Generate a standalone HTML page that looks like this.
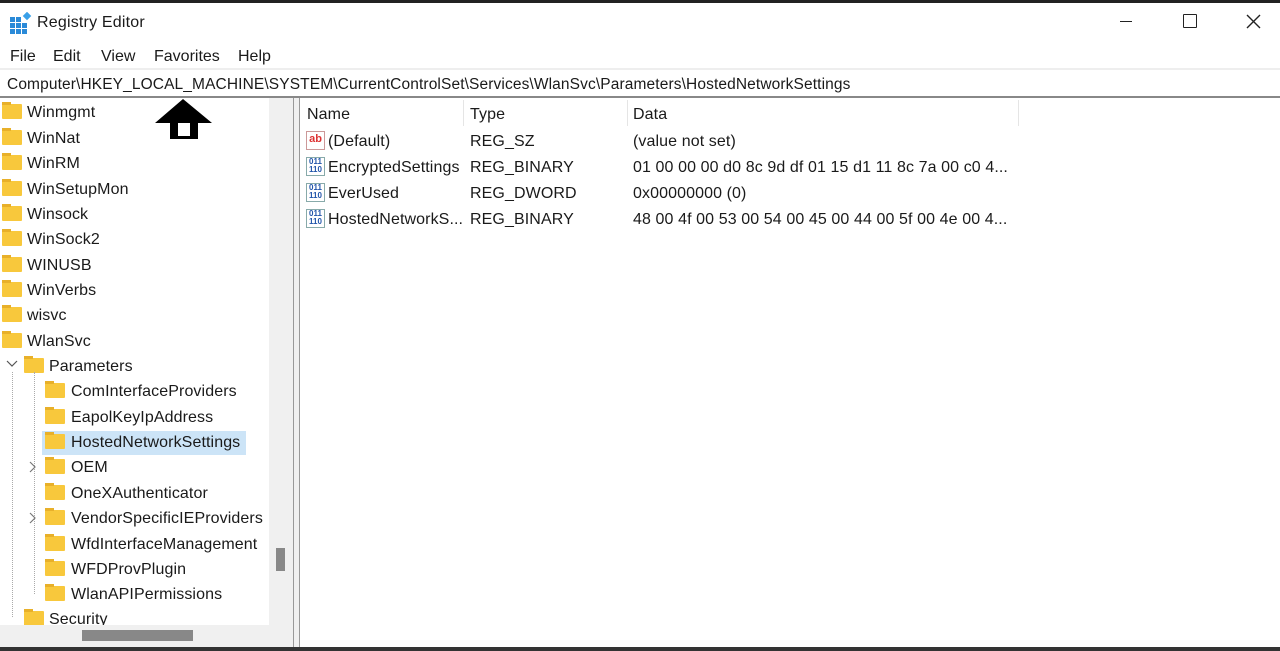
<!DOCTYPE html><html><head><style>
*{margin:0;padding:0;box-sizing:border-box}
body{width:1280px;height:651px;overflow:hidden;background:#fff;font-family:"Liberation Sans",sans-serif;font-size:16px;color:#1a1a1a;position:relative}
.a{position:absolute;white-space:nowrap}
.f{position:absolute;width:20px;height:15px;background:#f8c83c;border-radius:1px}
.f:before{content:"";position:absolute;left:0;top:-2px;width:9px;height:3px;background:#e8b02a}
.t{position:absolute;white-space:nowrap;letter-spacing:0.1px}
.ic{position:absolute;width:19px;height:19px;border:1px solid #8aa;background:#fff;font-size:8px;line-height:8px;color:#2255aa;font-weight:bold;text-align:center}
</style></head><body>
<div class="a" style="left:0;top:0;width:1280px;height:3px;background:#222"></div>
<div class="a" style="left:0;top:647px;width:1280px;height:4px;background:#333"></div>
<svg class="a" style="left:10px;top:12px" width="22" height="22"><rect x="0" y="5" width="5" height="5" fill="#2a8ad8"/><rect x="6" y="5" width="5" height="5" fill="#2a8ad8"/><rect x="0" y="11" width="5" height="5" fill="#2a8ad8"/><rect x="6" y="11" width="5" height="5" fill="#2a8ad8"/><rect x="12" y="11" width="5" height="5" fill="#2a8ad8"/><rect x="0" y="17" width="5" height="5" fill="#2a8ad8"/><rect x="6" y="17" width="5" height="5" fill="#2a8ad8"/><rect x="12" y="17" width="5" height="5" fill="#2a8ad8"/><rect x="14" y="1" width="6" height="6" fill="#3aa0e8" transform="rotate(45 17 4)"/></svg>
<div class="a" style="left:37px;top:14px;font-size:16px;letter-spacing:0.2px">Registry Editor</div>
<div class="a" style="left:1120px;top:21px;width:12px;height:1px;background:#222"></div>
<div class="a" style="left:1183px;top:14px;width:14px;height:14px;border:1.5px solid #222;border-radius:1px"></div>
<svg class="a" style="left:1246px;top:14px" width="15" height="15"><path d="M1 1L14 14M14 1L1 14" stroke="#222" stroke-width="1.4"/></svg>
<div class="a" style="left:10px;top:48px">File</div>
<div class="a" style="left:53px;top:48px">Edit</div>
<div class="a" style="left:101px;top:48px">View</div>
<div class="a" style="left:154px;top:48px">Favorites</div>
<div class="a" style="left:238px;top:48px">Help</div>
<div class="a" style="left:0;top:68px;width:1280px;height:30px;border-top:2px solid #eee;border-bottom:2px solid #888"></div>
<div class="a" style="left:7px;top:76px;font-size:15.5px;letter-spacing:0.12px">Computer\HKEY_LOCAL_MACHINE\SYSTEM\CurrentControlSet\Services\WlanSvc\Parameters\HostedNetworkSettings</div>
<div class="a" style="left:293px;top:98px;width:7px;height:549px;background:#f0f0f0;border-left:1px solid #999;border-right:1px solid #999"></div>
<div class="a" style="left:269px;top:98px;width:24px;height:528px;background:#f0f0f0"></div>
<div class="a" style="left:276px;top:548px;width:9px;height:23px;background:#888"></div>
<div class="a" style="left:0;top:625px;width:293px;height:22px;background:#f0f0f0"></div>
<div class="a" style="left:82px;top:630px;width:111px;height:11px;background:#888"></div>
<div class="f" style="left:2px;top:104px"></div><div class="t" style="left:27px;top:104px">Winmgmt</div>
<div class="f" style="left:2px;top:130px"></div><div class="t" style="left:27px;top:130px">WinNat</div>
<div class="f" style="left:2px;top:155px"></div><div class="t" style="left:27px;top:155px">WinRM</div>
<div class="f" style="left:2px;top:181px"></div><div class="t" style="left:27px;top:181px">WinSetupMon</div>
<div class="f" style="left:2px;top:206px"></div><div class="t" style="left:27px;top:206px">Winsock</div>
<div class="f" style="left:2px;top:231px"></div><div class="t" style="left:27px;top:231px">WinSock2</div>
<div class="f" style="left:2px;top:257px"></div><div class="t" style="left:27px;top:257px">WINUSB</div>
<div class="f" style="left:2px;top:282px"></div><div class="t" style="left:27px;top:282px">WinVerbs</div>
<div class="f" style="left:2px;top:307px"></div><div class="t" style="left:27px;top:307px">wisvc</div>
<div class="f" style="left:2px;top:333px"></div><div class="t" style="left:27px;top:333px">WlanSvc</div>
<svg class="a" style="left:6px;top:360px" width="12" height="8"><path d="M1 1L6 6L11 1" stroke="#555" fill="none" stroke-width="1.2"/></svg>
<div class="f" style="left:24px;top:358px"></div><div class="t" style="left:49px;top:358px">Parameters</div>
<div class="a" style="left:12px;top:372px;width:0;height:245px;border-left:1px dotted #aaa"></div>
<div class="a" style="left:34px;top:372px;width:0;height:222px;border-left:1px dotted #aaa"></div>
<div class="a" style="left:42px;top:431px;width:204px;height:24px;background:#cce4f7"></div>
<div class="f" style="left:45px;top:383px"></div><div class="t" style="left:71px;top:383px">ComInterfaceProviders</div>
<div class="f" style="left:45px;top:409px"></div><div class="t" style="left:71px;top:409px">EapolKeyIpAddress</div>
<div class="f" style="left:45px;top:434px"></div><div class="t" style="left:71px;top:434px">HostedNetworkSettings</div>
<svg class="a" style="left:29px;top:461px" width="8" height="12"><path d="M1 1L6 6L1 11" stroke="#777" fill="none" stroke-width="1.2"/></svg>
<div class="f" style="left:45px;top:459px"></div><div class="t" style="left:71px;top:459px">OEM</div>
<div class="f" style="left:45px;top:485px"></div><div class="t" style="left:71px;top:485px">OneXAuthenticator</div>
<svg class="a" style="left:29px;top:512px" width="8" height="12"><path d="M1 1L6 6L1 11" stroke="#777" fill="none" stroke-width="1.2"/></svg>
<div class="f" style="left:45px;top:510px"></div><div class="t" style="left:71px;top:510px">VendorSpecificIEProviders</div>
<div class="f" style="left:45px;top:536px"></div><div class="t" style="left:71px;top:536px">WfdInterfaceManagement</div>
<div class="f" style="left:45px;top:561px"></div><div class="t" style="left:71px;top:561px">WFDProvPlugin</div>
<div class="f" style="left:45px;top:586px"></div><div class="t" style="left:71px;top:586px">WlanAPIPermissions</div>
<div class="f" style="left:24px;top:611px"></div><div class="t" style="left:49px;top:611px">Security</div>
<div class="a" style="left:0;top:625px;width:269px;height:22px;background:#f0f0f0"></div>
<div class="a" style="left:82px;top:630px;width:111px;height:11px;background:#888"></div>
<svg class="a" style="left:154px;top:98px" width="60" height="42"><polygon points="29,1 58,25 44,25 44,41 16,41 16,25 1,25" fill="#000"/><rect x="24" y="25" width="12" height="13" fill="#fff"/></svg>
<div class="a" style="left:463px;top:100px;width:1px;height:26px;background:#e5e5e5"></div>
<div class="a" style="left:627px;top:100px;width:1px;height:26px;background:#e5e5e5"></div>
<div class="a" style="left:1018px;top:100px;width:1px;height:26px;background:#e5e5e5"></div>
<div class="t" style="left:307px;top:106px">Name</div><div class="t" style="left:470px;top:106px">Type</div><div class="t" style="left:633px;top:106px">Data</div>
<div class="ic" style="left:306px;top:131px;color:#d33;font-size:11px;line-height:15px;border-color:#c99">ab</div>
<div class="t" style="left:328px;top:133px">(Default)</div><div class="t" style="left:470px;top:133px">REG_SZ</div><div class="t" style="left:633px;top:133px">(value not set)</div>
<div class="ic" style="left:306px;top:157px">011<br>110</div>
<div class="t" style="left:328px;top:159px">EncryptedSettings</div><div class="t" style="left:470px;top:159px">REG_BINARY</div><div class="t" style="left:633px;top:159px">01 00 00 00 d0 8c 9d df 01 15 d1 11 8c 7a 00 c0 4...</div>
<div class="ic" style="left:306px;top:183px">011<br>110</div>
<div class="t" style="left:328px;top:185px">EverUsed</div><div class="t" style="left:470px;top:185px">REG_DWORD</div><div class="t" style="left:633px;top:185px">0x00000000 (0)</div>
<div class="ic" style="left:306px;top:209px">011<br>110</div>
<div class="t" style="left:328px;top:211px">HostedNetworkS...</div><div class="t" style="left:470px;top:211px">REG_BINARY</div><div class="t" style="left:633px;top:211px">48 00 4f 00 53 00 54 00 45 00 44 00 5f 00 4e 00 4...</div>
</body></html>
